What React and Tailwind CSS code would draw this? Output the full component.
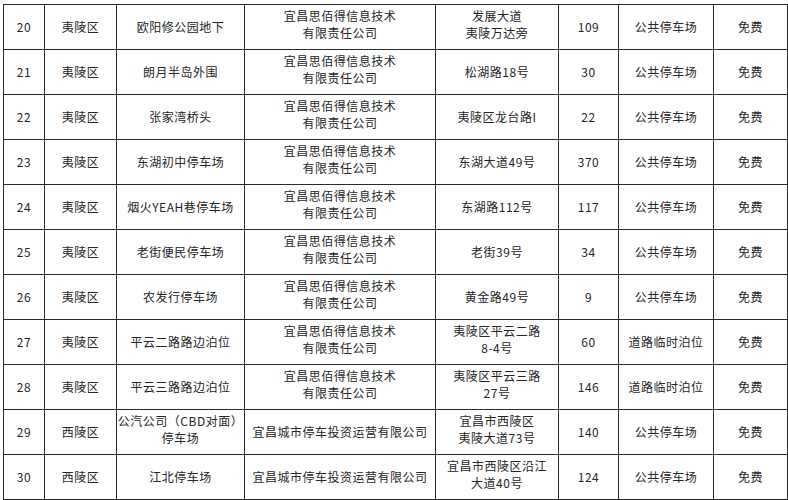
import React from "react";

const CO1 = ["宜昌思佰得信息技术", "有限责任公司"];
const CO2 = ["宜昌城市停车投资运营有限公司"];

const rows = [
  ["20", "夷陵区", ["欧阳修公园地下"], CO1, ["发展大道", "夷陵万达旁"], "109", "公共停车场", "免费"],
  ["21", "夷陵区", ["朗月半岛外围"], CO1, ["松湖路18号"], "30", "公共停车场", "免费"],
  ["22", "夷陵区", ["张家湾桥头"], CO1, ["夷陵区龙台路I"], "22", "公共停车场", "免费"],
  ["23", "夷陵区", ["东湖初中停车场"], CO1, ["东湖大道49号"], "370", "公共停车场", "免费"],
  ["24", "夷陵区", ["烟火YEAH巷停车场"], CO1, ["东湖路112号"], "117", "公共停车场", "免费"],
  ["25", "夷陵区", ["老街便民停车场"], CO1, ["老街39号"], "34", "公共停车场", "免费"],
  ["26", "夷陵区", ["农发行停车场"], CO1, ["黄金路49号"], "9", "公共停车场", "免费"],
  ["27", "夷陵区", ["平云二路路边泊位"], CO1, ["夷陵区平云二路", "8-4号"], "60", "道路临时泊位", "免费"],
  ["28", "夷陵区", ["平云三路路边泊位"], CO1, ["夷陵区平云三路", "27号"], "146", "道路临时泊位", "免费"],
  ["29", "西陵区", ["公汽公司（CBD对面）", "停车场"], CO2, ["宜昌市西陵区", "夷陵大道73号"], "140", "公共停车场", "免费"],
  ["30", "西陵区", ["江北停车场"], CO2, ["宜昌市西陵区沿江", "大道40号"], "124", "公共停车场", "免费"],
];

function Cell({ children }) {
  const lines = Array.isArray(children) ? children : [children];
  const multi = lines.length > 1;
  return (
    <div
      className={
        multi
          ? "flex flex-col items-center justify-center border-r border-b border-[#2a2a2a] text-center leading-[17px] pb-[6px]"
          : "flex flex-col items-center justify-center border-r border-b border-[#2a2a2a] text-center leading-[17px] pb-[2px]"
      }
    >
      {lines.map((l, i) => (
        <span key={i} className="whitespace-nowrap">{l}</span>
      ))}
    </div>
  );
}

export default function App() {
  return (
    <div
      className="w-[788px] h-[500px] bg-white overflow-hidden pt-[4px] pl-[3px] text-[12px] tracking-[0.5px] text-[#262626]"
      style={{ fontFamily: '"Noto Sans CJK SC", "Noto Sans", sans-serif' }}
    >
      <div className="grid grid-cols-[41px_72px_128px_191px_123px_60px_95px_74px] auto-rows-[45px] border-l border-t border-[#2a2a2a]">
        {rows.map((r, i) => (
          <React.Fragment key={i}>
            {r.map((c, j) => (
              <Cell key={j}>{c}</Cell>
            ))}
          </React.Fragment>
        ))}
      </div>
    </div>
  );
}
